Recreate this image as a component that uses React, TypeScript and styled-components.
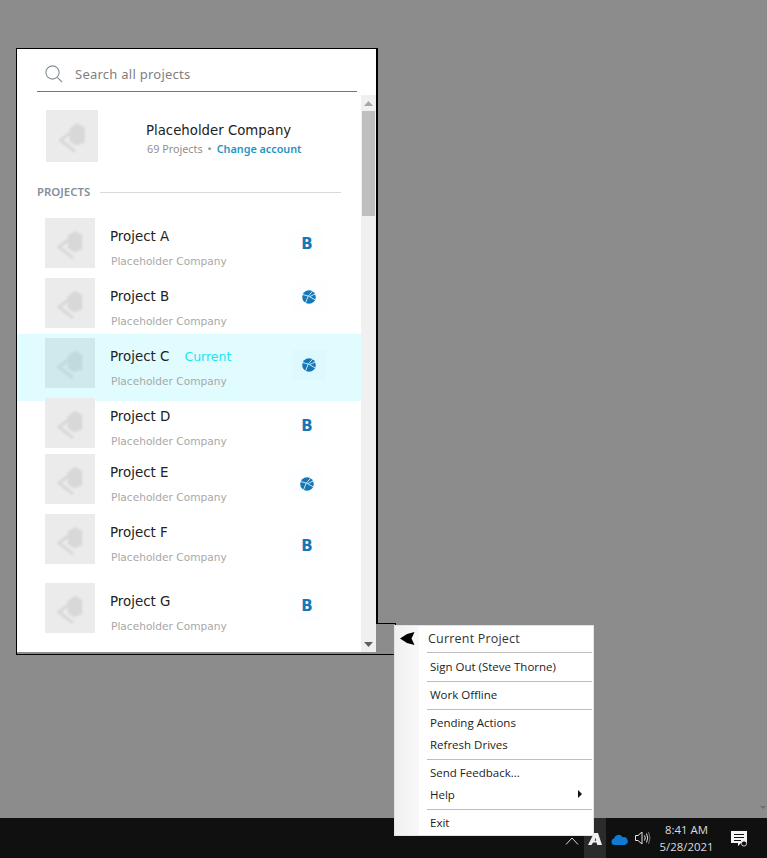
import styled, { createGlobalStyle } from "styled-components";

const GlobalStyle = createGlobalStyle`
  html, body {
    margin: 0;
    padding: 0;
    background: #8c8c8c;
  }
`;

const Screen = styled.div`
  position: relative;
  width: 767px;
  height: 858px;
  overflow: hidden;
  display: flex;
  flex-direction: column;
  font-family: "DejaVu Sans", sans-serif;
`;

const Desktop = styled.div`
  flex: 1;
  padding: 48px 0 0 16px;
  background: #8c8c8c;
`;

const Panel = styled.div`
  position: relative;
  box-sizing: border-box;
  width: 362px;
  height: 607px;
  display: flex;
  flex-direction: column;
  border: 1px solid #000;
  border-right-width: 2px;
  background: #8c8c8c;
`;

const Notch = styled.div`
  position: absolute;
  left: 359px;
  top: 574px;
  box-sizing: border-box;
  width: 20px;
  height: 32px;
  background: #8c8c8c;
  border: 1px solid #000;
  border-left: none;
`;

const SearchArea = styled.div`
  height: 46px;
  box-sizing: border-box;
  padding: 0 19px 3px 20px;
  background: #fff;
`;

const SearchBar = styled.div`
  height: 43px;
  box-sizing: border-box;
  display: flex;
  align-items: center;
  gap: 12px;
  padding: 8px 0 0 8px;
  border-bottom: 1px solid #1f93c0;
  color: #808080;
  font-family: "Noto Sans", sans-serif;
  font-size: 13px;
  letter-spacing: 0.25px;
`;

const Body = styled.div`
  height: 557px;
  display: flex;
`;

const Content = styled.div`
  width: 344px;
  background: #fff;
  overflow: hidden;
`;

const Scrollbar = styled.div`
  width: 15px;
  display: flex;
  flex-direction: column;
  align-items: center;
  justify-content: space-between;
  background: #f0f0f0;
  position: relative;
`;

const ScrollButton = styled.div`
  height: 16px;
  display: flex;
  align-items: center;
  justify-content: center;
`;

const ScrollThumb = styled.div`
  position: absolute;
  top: 16px;
  left: 1px;
  width: 13px;
  height: 105px;
  background: #bfbfbf;
`;

const Company = styled.div`
  display: flex;
  align-items: center;
  gap: 48px;
  padding: 15px 0 0 29px;
`;

const CompanyText = styled.div`
  padding-top: 7px;
`;

const CompanyName = styled.div`
  font-size: 13.3px;
  line-height: 18px;
  color: #222;
  margin-bottom: 1px;
`;

const CompanyMeta = styled.div`
  display: flex;
  gap: 5px;
  padding-left: 1px;
  font-family: "Noto Sans", sans-serif;
  font-size: 10.8px;
  line-height: 16px;
  color: #8f8f8f;
`;

const Link = styled.span`
  color: #1f96c4;
  font-weight: 600;
`;

const SectionHeading = styled.div`
  display: flex;
  align-items: center;
  gap: 10px;
  margin: 22px 20px 0 20px;
  font-family: "Noto Sans", sans-serif;
  font-size: 11.4px;
  line-height: 16px;
  font-weight: 600;
  color: #84909a;
  &::after {
    content: "";
    flex: 1;
    height: 1px;
    background: #d9d9d9;
  }
`;

const Row = styled.div<{ $gap: number; $current?: boolean }>`
  display: flex;
  align-items: flex-start;
  margin-top: ${(p) => p.$gap}px;
  padding: ${(p) => (p.$current ? "4px 0 13px 28px" : "0 0 0 28px")};
  background: ${(p) => (p.$current ? "#e0fcff" : "transparent")};
`;

const Thumb = styled.div<{ $size: number; $current?: boolean }>`
  flex: none;
  width: ${(p) => p.$size}px;
  height: ${(p) => p.$size}px;
  display: flex;
  align-items: center;
  justify-content: center;
  background: ${(p) => (p.$current ? "#cfe9ec" : "#ebebeb")};
  color: ${(p) => (p.$current ? "#bfdbde" : "#d8d8d8")};
`;

const RowText = styled.div`
  box-sizing: border-box;
  width: 180px;
  height: 50px;
  margin-left: 15px;
  padding-top: 11px;
`;

const RowTitle = styled.div`
  display: flex;
  gap: 15px;
  font-size: 13.4px;
  line-height: 16px;
  color: #222;
`;

const CurrentTag = styled.span`
  color: #1de4f2;
  font-size: 12.5px;
`;

const RowCompany = styled.div`
  margin: 8px 0 0 1px;
  font-size: 10.6px;
  line-height: 16px;
  color: #a8a8a8;
`;

const Badge = styled.div<{ $top: number; $left: number; $current?: boolean }>`
  width: 34px;
  height: 30px;
  margin-top: ${(p) => p.$top}px;
  margin-left: ${(p) => p.$left}px;
  display: flex;
  align-items: center;
  justify-content: center;
  background: ${(p) => (p.$current ? "#def9fe" : "#fcfeff")};
  color: #1577b5;
  font-size: 15px;
  font-weight: 700;
`;

const BottomStrip = styled.div`
  height: 2px;
`;

const DesktopArrow = styled.div`
  position: absolute;
  right: 1px;
  top: 806px;
  width: 0;
  height: 0;
  border-left: 3px solid transparent;
  border-right: 3px solid transparent;
  border-top: 3px solid #6e6e6e;
`;

const Taskbar = styled.div`
  height: 40px;
  flex: none;
  display: flex;
  align-items: stretch;
  padding-left: 560px;
  background: #101010;
  color: #ddd;
`;

const TrayItem = styled.div<{ $width: number; $active?: boolean }>`
  width: ${(p) => p.$width}px;
  display: flex;
  align-items: flex-end;
  justify-content: center;
  padding-bottom: 13px;
  box-sizing: border-box;
  background: ${(p) => (p.$active ? "#2b2b2b" : "transparent")};
`;

const NotificationItem = styled(TrayItem)`
  margin-left: 10px;
  padding-bottom: 11px;
`;

const Clock = styled.div`
  width: 69px;
  display: flex;
  flex-direction: column;
  align-items: center;
  justify-content: center;
  padding-bottom: 1px;
  font-family: "Open Sans", sans-serif;
  font-size: 11.4px;
  line-height: 17px;
`;

const Menu = styled.div`
  position: absolute;
  left: 394px;
  top: 625px;
  box-sizing: border-box;
  width: 200px;
  height: 211px;
  padding: 1px 1px 0;
  border: 1px solid #e4e4e4;
  background: linear-gradient(90deg, #f0f0f0, #f8f8f8 24px, #fff 24px);
  font-family: "Open Sans", sans-serif;
  font-size: 11.5px;
  color: #1c1c1c;
`;

const MenuItem = styled.div<{ $tall?: boolean }>`
  box-sizing: border-box;
  height: ${(p) => (p.$tall ? 23 : 22)}px;
  display: flex;
  align-items: center;
  justify-content: space-between;
  padding: 0 10px ${(p) => (p.$tall ? 0 : 2)}px 34px;
`;

const CurrentItem = styled(MenuItem)`
  justify-content: flex-start;
  gap: 13px;
  padding: 0 10px 0 4px;
  color: #333;
  font-size: 12.5px;
  letter-spacing: 0.2px;
`;

const Separator = styled.div`
  height: 1px;
  margin: 3px 0 2px 31px;
  background: #bdbdbd;
`;

const SubmenuArrow = styled.span`
  width: 0;
  height: 0;
  border-top: 4px solid transparent;
  border-bottom: 4px solid transparent;
  border-left: 4px solid #111;
`;

const ThumbIcon = ({ size }: { size: number }) => (
  <svg width={size} height={size} viewBox="0 0 50 50" fill="none">
    <defs>
      <filter id="soft">
        <feGaussianBlur stdDeviation="1" />
      </filter>
    </defs>
    <g filter="url(#soft)" stroke="currentColor">
      <path d="M23 18 L30 13 L37 17 V31 L29 34 L23 30 Z" fill="currentColor" strokeWidth="0.5" />
      <path d="M23 22 L14 29 L28 40" strokeWidth="3" />
    </g>
  </svg>
);

const Globe = () => (
  <svg width="14" height="14" viewBox="0 0 14 14">
    <circle cx="7" cy="7" r="6.8" fill="#1577b5" />
    <path
      d="M0.5 4.5 Q6 5 13.5 10 M3.5 13 Q5 6 10.5 1.2 M8 6.5 Q11 5 13 4"
      stroke="#dff1fa"
      strokeWidth="0.9"
      fill="none"
    />
  </svg>
);

const projects = [
  { name: "Project A", gap: 18, top: 11, left: 0, kind: "bim" },
  { name: "Project B", gap: 10, top: 4, left: 2, kind: "globe" },
  { name: "Project C", gap: 6, top: 12, left: 2, kind: "globe", current: true },
  { name: "Project D", gap: -3, top: 13, left: 0, kind: "bim" },
  { name: "Project E", gap: 6, top: 15, left: 0, kind: "globe" },
  { name: "Project F", gap: 10, top: 17, left: 0, kind: "bim" },
  { name: "Project G", gap: 19, top: 8, left: 0, kind: "bim" },
];

const App = () => {
  return (
    <Screen>
      <GlobalStyle />
      <Desktop>
        <Panel>
          <SearchArea>
            <SearchBar>
              <svg width="18" height="18" viewBox="0 0 18 18" fill="none" stroke="#7f9299" strokeWidth="1.1">
                <circle cx="7.5" cy="7.5" r="6.6" />
                <path d="M12.3 12.3 L17 17" />
              </svg>
              Search all projects
            </SearchBar>
          </SearchArea>
          <Body>
            <Content>
              <Company>
                <Thumb $size={52}>
                  <ThumbIcon size={52} />
                </Thumb>
                <CompanyText>
                  <CompanyName>Placeholder Company</CompanyName>
                  <CompanyMeta>
                    <span>69 Projects</span>
                    <span>•</span>
                    <Link>Change account</Link>
                  </CompanyMeta>
                </CompanyText>
              </Company>
              <SectionHeading>PROJECTS</SectionHeading>
              {projects.map((p) => (
                <Row key={p.name} $gap={p.gap} $current={p.current}>
                  <Thumb $size={50} $current={p.current}>
                    <ThumbIcon size={50} />
                  </Thumb>
                  <RowText>
                    <RowTitle>
                      {p.name}
                      {p.current && <CurrentTag>Current</CurrentTag>}
                    </RowTitle>
                    <RowCompany>Placeholder Company</RowCompany>
                  </RowText>
                  <Badge $top={p.top} $left={p.left} $current={p.current}>
                    {p.kind === "bim" ? "B" : <Globe />}
                  </Badge>
                </Row>
              ))}
            </Content>
            <Scrollbar>
              <ScrollButton>
                <svg width="9" height="5" viewBox="0 0 9 5">
                  <path d="M0 5 L4.5 0 L9 5 Z" fill="#a6a6a6" />
                </svg>
              </ScrollButton>
              <ScrollThumb />
              <ScrollButton>
                <svg width="9" height="5" viewBox="0 0 9 5">
                  <path d="M0 0 L4.5 5 L9 0 Z" fill="#606060" />
                </svg>
              </ScrollButton>
            </Scrollbar>
          </Body>
          <BottomStrip />
          <Notch />
        </Panel>
      </Desktop>
      <DesktopArrow />
      <Taskbar>
        <TrayItem $width={24}>
          <svg width="14" height="8" viewBox="0 0 14 8" fill="none" stroke="#d8d8d8" strokeWidth="1">
            <path d="M1 7.5 L7 1 L13 7.5" />
          </svg>
        </TrayItem>
        <TrayItem $width={22} $active>
          <svg width="14" height="12" viewBox="0 0 14 12">
            <path d="M0 12 L6 0 H10 L14 12 H9.2 L8.6 9.6 H5.2 L3.4 12 Z M6.6 7.8 H8.2 L7.6 4.8 Z" fill="#f0f0f0" fillRule="evenodd" />
          </svg>
        </TrayItem>
        <TrayItem $width={27}>
          <svg width="17" height="11" viewBox="0 0 17 11">
            <path d="M3.5 11 A3.3 3.3 0 0 1 3 4.5 A4.6 4.6 0 0 1 11.5 3.2 A3.9 3.9 0 0 1 13.8 11 Z" fill="#0f7bd4" />
          </svg>
        </TrayItem>
        <TrayItem $width={19}>
          <svg width="16" height="14" viewBox="0 0 16 14" fill="none" stroke="#e4e4e4" strokeWidth="1">
            <path d="M0.5 4.5 H3 L7 1 V13 L3 9.5 H0.5 Z" />
            <path d="M9.5 4.5 Q11 7 9.5 9.5" />
            <path d="M11.5 2.5 Q14 7 11.5 11.5" />
            <path d="M13.5 1 Q16.5 7 13.5 13" stroke="#777" />
          </svg>
        </TrayItem>
        <Clock>
          <span>8:41 AM</span>
          <span>5/28/2021</span>
        </Clock>
        <NotificationItem $width={17}>
          <svg width="17" height="16" viewBox="0 0 17 16">
            <path d="M0 0 H16 V12 H10 L7 15 V12 H0 Z" fill="#f4f4f4" />
            <path d="M3 3.5 H13 M3 6.5 H13 M3 9.5 H10" stroke="#101010" strokeWidth="1" />
            <circle cx="13" cy="12.5" r="2.6" fill="#101010" stroke="#f4f4f4" strokeWidth="0.8" />
          </svg>
        </NotificationItem>
      </Taskbar>
      <Menu>
        <CurrentItem>
          <svg width="15" height="13" viewBox="0 0 15 13">
            <path d="M0 6.5 L7 2 L14.5 0 L11.5 6.5 L14.5 13 L7 11 Z" fill="#000" />
          </svg>
          Current Project
        </CurrentItem>
        <Separator />
        <MenuItem $tall>Sign Out (Steve Thorne)</MenuItem>
        <Separator />
        <MenuItem>Work Offline</MenuItem>
        <Separator />
        <MenuItem>Pending Actions</MenuItem>
        <MenuItem>Refresh Drives</MenuItem>
        <Separator />
        <MenuItem>Send Feedback...</MenuItem>
        <MenuItem>
          Help
          <SubmenuArrow />
        </MenuItem>
        <Separator />
        <MenuItem>Exit</MenuItem>
      </Menu>
    </Screen>
  );
};

export default App;
